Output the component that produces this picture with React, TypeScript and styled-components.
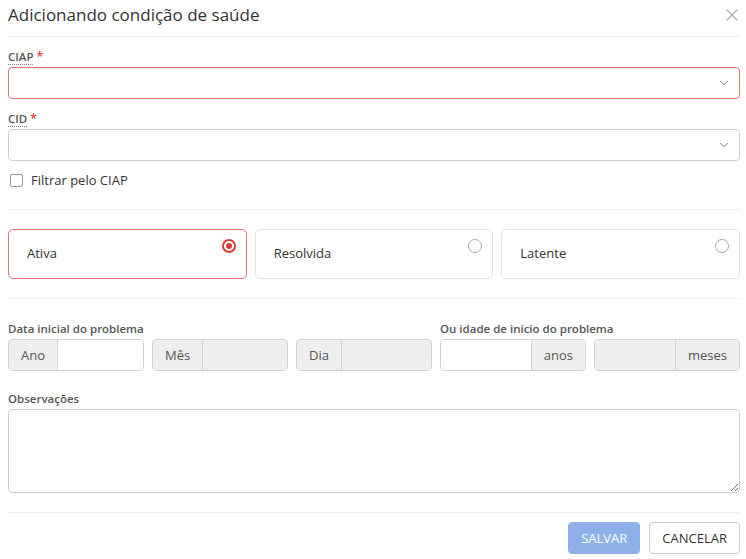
import React from "react";
import styled, { createGlobalStyle } from "styled-components";
import { ChevronDown, X } from "lucide-react";

const GlobalStyle = createGlobalStyle`
  body {
    margin: 0;
    background: #fff;
    font-family: "Open Sans", "Liberation Sans", sans-serif;
    color: #333;
  }
  * { box-sizing: border-box; }
`;

const Modal = styled.div`
  width: 746px;
  padding: 0 6px 0 8px;
  display: flex;
  flex-direction: column;
`;

const Header = styled.div`
  display: flex;
  align-items: center;
  justify-content: space-between;
  padding: 3px 0 9px;
  border-bottom: 1px solid #eee;
`;

const Title = styled.h1`
  margin: 0;
  font-size: 17px;
  line-height: 24px;
  font-weight: 400;
  color: #333;
`;

const CloseButton = styled.button`
  border: none;
  background: none;
  padding: 0;
  margin-right: -2px;
  display: flex;
  color: #b0b0b0;
  cursor: pointer;
`;

const Field = styled.div<{ $top?: number }>`
  display: flex;
  flex-direction: column;
  margin-top: ${(p) => p.$top ?? 12}px;
`;

const Label = styled.label`
  font-size: 11.5px;
  line-height: 15px;
  font-weight: 600;
  color: #555;
  margin-bottom: 3px;
`;

const Abbr = styled.span`
  border-bottom: 1px dotted #888;
`;

const Required = styled.span`
  color: #e53935;
  margin-left: 3px;
  font-size: 12px;
  vertical-align: top;
`;

const SelectBox = styled.div<{ $error?: boolean }>`
  height: 32px;
  border: 1px solid ${(p) => (p.$error ? "#e57373" : "#ccc")};
  border-radius: 4px;
  display: flex;
  align-items: center;
  justify-content: flex-end;
  padding-right: 8px;
  color: #666;
`;

const CheckRow = styled.label`
  display: flex;
  align-items: center;
  gap: 8px;
  margin-top: 10px;
  padding-left: 2px;
  font-size: 13px;
  color: #333;
  height: 18px;
`;

const CheckBox = styled.span`
  width: 13px;
  height: 13px;
  border: 1px solid #999;
  border-radius: 2px;
`;

const Divider = styled.hr<{ $top: number }>`
  border: none;
  border-top: 1px solid #eee;
  margin: ${(p) => p.$top}px 0 0;
`;

const Cards = styled.div`
  display: grid;
  grid-template-columns: repeat(3, 1fr);
  gap: 8px;
  margin-top: 19px;
`;

const Card = styled.div<{ $active?: boolean }>`
  position: relative;
  height: 50px;
  border: 1px solid ${(p) => (p.$active ? "#e57373" : "#e3e3e3")};
  border-radius: 5px;
  display: flex;
  align-items: center;
  padding: 0 0 2px 18px;
  font-size: 13px;
  color: #333;
`;

const Radio = styled.span<{ $checked?: boolean }>`
  position: absolute;
  top: 9px;
  right: 10px;
  width: 14px;
  height: 14px;
  border-radius: 50%;
  border: ${(p) => (p.$checked ? "2px solid #dd3b3b" : "1px solid #aaa")};
  display: flex;
  align-items: center;
  justify-content: center;
  &::after {
    content: "";
    display: ${(p) => (p.$checked ? "block" : "none")};
    width: 6px;
    height: 6px;
    border-radius: 50%;
    background: #dd3b3b;
  }
`;

const DateGrid = styled.div`
  display: grid;
  grid-template-columns: 424fr 300fr;
  gap: 8px;
  margin-top: 22px;
`;

const Group = styled.div<{ $cols: number }>`
  display: grid;
  grid-template-columns: repeat(${(p) => p.$cols}, 1fr);
  column-gap: 8px;
  & > ${Label} {
    grid-column: 1 / -1;
  }
`;

const InputGroup = styled.div`
  display: flex;
  height: 32px;
  border: 1px solid #d2d2d2;
  border-radius: 4px;
  overflow: hidden;
`;

const Addon = styled.span<{ $side: "left" | "right" }>`
  display: flex;
  align-items: center;
  padding: 0 12px;
  background: #eee;
  font-size: 13px;
  color: #555;
  ${(p) =>
    p.$side === "left"
      ? "border-right: 1px solid #d2d2d2;"
      : "border-left: 1px solid #d2d2d2;"}
`;

const Input = styled.div<{ $disabled?: boolean }>`
  flex: 1;
  background: ${(p) => (p.$disabled ? "#eee" : "#fff")};
`;

const TextArea = styled.textarea`
  height: 84px;
  border: 1px solid #ccc;
  border-radius: 4px;
  resize: vertical;
  font-family: inherit;
`;

const Footer = styled.div`
  display: flex;
  justify-content: flex-end;
  gap: 9px;
  margin-top: 9px;
`;

const Button = styled.button<{ $primary?: boolean }>`
  height: 32px;
  padding: 0 12px;
  border-radius: 4px;
  font-family: inherit;
  font-size: 13px;
  text-transform: uppercase;
  border: 1px solid ${(p) => (p.$primary ? "#8db0ea" : "#ccc")};
  background: ${(p) => (p.$primary ? "#8db0ea" : "#fff")};
  color: ${(p) => (p.$primary ? "#fff" : "#333")};
`;

export default function App() {
  return (
    <>
      <GlobalStyle />
      <Modal>
        <Header>
          <Title>Adicionando condição de saúde</Title>
          <CloseButton aria-label="Fechar">
            <X size={20} strokeWidth={1.6} />
          </CloseButton>
        </Header>

        <Field>
          <Label>
            <Abbr>CIAP</Abbr>
            <Required>*</Required>
          </Label>
          <SelectBox $error>
            <ChevronDown size={14} strokeWidth={1.5} />
          </SelectBox>
        </Field>

        <Field>
          <Label>
            <Abbr>CID</Abbr>
            <Required>*</Required>
          </Label>
          <SelectBox>
            <ChevronDown size={14} strokeWidth={1.5} />
          </SelectBox>
        </Field>

        <CheckRow>
          <CheckBox />
          Filtrar pelo CIAP
        </CheckRow>

        <Divider $top={20} />

        <Cards>
          <Card $active>
            Ativa
            <Radio $checked />
          </Card>
          <Card>
            Resolvida
            <Radio />
          </Card>
          <Card>
            Latente
            <Radio />
          </Card>
        </Cards>

        <Divider $top={19} />

        <DateGrid>
          <Group $cols={3}>
            <Label>Data inicial do problema</Label>
            <InputGroup>
              <Addon $side="left">Ano</Addon>
              <Input />
            </InputGroup>
            <InputGroup>
              <Addon $side="left">Mês</Addon>
              <Input $disabled />
            </InputGroup>
            <InputGroup>
              <Addon $side="left">Dia</Addon>
              <Input $disabled />
            </InputGroup>
          </Group>
          <Group $cols={2}>
            <Label>Ou idade de inicio do problema</Label>
            <InputGroup>
              <Input />
              <Addon $side="right">anos</Addon>
            </InputGroup>
            <InputGroup>
              <Input $disabled />
              <Addon $side="right">meses</Addon>
            </InputGroup>
          </Group>
        </DateGrid>

        <Field $top={20}>
          <Label>Observações</Label>
          <TextArea />
        </Field>

        <Divider $top={19} />

        <Footer>
          <Button $primary>Salvar</Button>
          <Button>Cancelar</Button>
        </Footer>
      </Modal>
    </>
  );
}
